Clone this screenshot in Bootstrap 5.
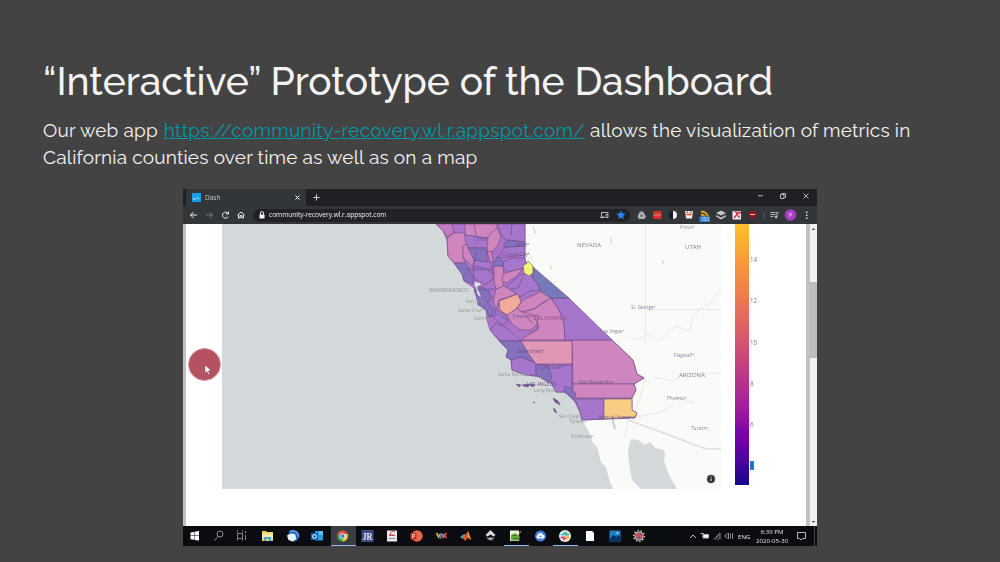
<!DOCTYPE html>
<html lang="en">
<head>
    <meta charset="utf-8">
    <title>Prototype of the Dashboard</title>
    <link rel="stylesheet" href="https://cdn.jsdelivr.net/npm/bootstrap@5.3.0/dist/css/bootstrap.min.css">
    <style>
        body { background: #434343; color: #f3f3f3; font-family: Raleway, Lato, sans-serif; width: 1000px; height: 562px; overflow: hidden; }
        .slide { padding: 58px 43px 0; height: 562px; }
        .slide h1 { font-size: 39px; line-height: 47px; font-weight: 500; letter-spacing: -.05px; margin: 0 0 12px; white-space: nowrap; }
        .intro { font-size: 19px; line-height: 27px; font-weight: 400; margin: 0 0 18px; white-space: nowrap; letter-spacing: .2px; }
        .intro a { color: #0097a7; letter-spacing: .28px; margin-left: .8px; }
        .window { width: 634px; height: 357px; margin-left: 140px; font-family: "Open Sans", sans-serif; filter: blur(.55px); background: #fff; }
        .tabs { height: 17px; background: #1e2024; }
        .tab { width: 120px; height: 17px; margin-left: 3px; padding: 0 6px; background: #323639; border-radius: 3px 3px 0 0; font-size: 6.5px; color: #c6c8ca; }
        .toolbar { height: 18px; background: #323639; }
        .address { width: 377px; height: 13px; border-radius: 7px; background: #202226; font-size: 6.55px; color: #f4f5f6; margin-left: 5px; padding: 0 0 0 6px; }
        .content { height: 302px; border-left: 3px solid #bfc0c2; }
        .gutter { width: 36px; }
        .scale { width: 14px; height: 261px; margin-left: 14px; background: linear-gradient(#fbc127 0, #f99a3b 14%, #ed7851 29%, #da5c69 42%, #c23e81 55%, #a11b9b 71%, #7601a8 81%, #4b03a1 91%, #150789 100%); }
        .ticks { width: 57px; padding: 31px 0 0 1px; font-size: 6.2px; line-height: 10px; color: #747883; }
        .ticks div { height: 41.3px; }
        .ticks .picked span { background: #2380d8; color: #125aa6; }
        .inner-bar { width: 4px; background: #c2c2c2; }
        .scroll { width: 7px; background: #f2f2f2; }
        .scroll .thumb { height: 76px; background: #bdbdbd; }
        .taskbar { height: 20px; background: #0b0c10; }
        .task { width: 24.7px; height: 20px; border-bottom: 1px solid transparent; }
        .task.open { border-color: #8fbdf0; }
        .task.current { background: #3a3d43; }
        .clock { font-size: 6.1px; line-height: 9px; color: #e6e6e6; width: 40px; padding-top: 1px; }
        .lang { width: 17px; padding: 0 0 0 3px; }
        .click-spot { left: 5px; top: 159px; width: 33px; height: 33px; border-radius: 50%; background: #b55262; border: 1px solid #d79ba4; }
        svg { display: block; flex: none; }
    </style>
</head>
<body>
    <main class="slide">
        <h1>“Interactive” Prototype of the Dashboard</h1>
        <p class="intro">Our web app <a href="#">https://community-recovery.wl.r.appspot.com/</a> allows the visualization of metrics in<br>California counties over time as well as on a map</p>

        <div class="window position-relative">
            <div class="tabs d-flex">
                <div class="tab d-flex align-items-center">
                    <svg width="9" height="9" class="me-1"><path fill="#169fe8" d="M0 0h9v9H0z"/><path fill="none" stroke="#a7dcf6" d="M1.5 7V5.500l2 .7 2-1.400 2 .8"/></svg>
                    <span>Dash</span>
                    <svg class="ms-auto" width="5" height="5"><path stroke="#fff" d="M.5.5l4 4m0-4l-4 4"/></svg>
                </div>
                <svg width="511" height="17">
                    <g fill="none" stroke="#b5b6b8"><path stroke="#dadbdc" d="M7.500 8.500h6m-3-3v6"/><path d="M452 6.700h5M474.500 5.500h3.500v4h-3.500zM476 5.500v-1h3.500v4h-1M497.500 4.500l5 5m0-5l-5 5"/></g>
                </svg>
            </div>
            <div class="toolbar d-flex align-items-center">
                <svg width="65" height="18" fill="none" stroke="#f0f0f1">
                    <path d="M14 9H7.500m3-3l-3 3 3 3"/>
                    <path stroke="#787b7f" d="M23 9h6.500m-3-3l3 3-3 3"/>
                    <path d="M45 7.500a3 3 0 1 0 .2 3M45.500 5.500V8H43M54.500 9l3.500-3 3.500 3M55.500 8.500v3.500h1.700V9.500h1.600v2.500h1.700V8.500"/>
                </svg>
                <div class="address d-flex align-items-center">
                    <svg width="6" height="8" class="me-1"><path fill="#f4f5f6" d="M.5 3.500h5v4h-5z"/><path fill="none" stroke="#e4e5e6" d="M1.500 4V2a1.500 1.500 0 0 1 3 0v2"/></svg>
                    <span>community-recovery.wl.r.appspot.com</span>
                    <svg class="ms-auto" width="31" height="12"><path fill="none" stroke="#b7b9bd" d="M5.500 8H2.500V3.500h6.500V5M1 8.500h4.500M7 5.500h2v3H7z"/><path fill="#2385ee" d="M22 1.500l1.300 2.800 3.200.4-2.400 2.200.7 3.200-2.800-1.600-2.800 1.600.7-3.200-2.400-2.200 3.200-.4z"/></svg>
                </div>
                <!-- extension buttons -->
                <svg width="187" height="18" viewBox="630 0 187 18">
                    <path fill="#aeb1b3" d="M640 5.500h3l3 5-1.500 2.500h-5.500l-1.500-2.500z"/><path fill="#54575a" d="M641.500 8l1.500 2.500h-3z"/>
                    <path fill="#d6302b" d="M653 5h8.500v8H653z"/><path stroke="#f4a9a4" stroke-dasharray="1.500 .5" d="M654 9h6.500"/>
                    <circle cx="673" cy="9" r="4" fill="#16181b"/><path fill="#f2f2f2" d="M673 5a4 4 0 0 1 0 8z"/>
                    <path fill="#f3ebe1" d="M685 5h8l-1 7.500h-6z"/><path stroke="#e0482f" d="M686.500 8.500h5M687 5.500v1.500m4-1.500v1.500" stroke-width="1.600"/>
                    <path fill="none" stroke="#e5a126" stroke-width="1.800" d="M701 5.500c3 0 6 2 7 5M701 8.500c2 0 3 1 4 2"/><path fill="#347bdd" d="M699.500 10.500h10.500v5.500h-10.500z"/><text x="701" y="15" font-size="4.500" fill="#e5effc">100</text>
                    <path fill="#c4c6c7" d="M721 4.500l5 2.500-5 2.500-5-2.500zM716 9l5 2.500 5-2.500v1.500l-5 3-5-3z"/>
                    <path fill="#f6ecec" d="M732.500 5h8.500v8.500h-8.500z"/><path fill="none" stroke="#c4283b" stroke-width="1.200" d="M734 12l5-6M734 6h2.500v2M737 10h2v2M738 6h2v2"/>
                    <path fill="#8b1922" d="M752.500 4.500l4 1.300v3.700l-4 4-4-4V5.800z"/><path stroke="#e9c3c6" d="M750 8.500h5"/>
                    <path stroke="#54575b" d="M764 6v7"/>
                    <path fill="none" stroke="#b7b9bd" d="M770.500 6.500h5M770.500 8.500h5M770.500 10.500h3M777 6v5.500M776.500 6.500h2"/><circle cx="776" cy="11" r="1.300" fill="#b7b9bd"/>
                    <circle cx="790.500" cy="9" r="5.800" fill="#a63fc0"/><text x="788.800" y="11.200" font-size="6" fill="#eed5f4">P</text>
                    <path fill="#dcdddf" d="M806 5.500h1.500V7H806zM806 8.500h1.500V10H806zM806 11.500h1.500V13H806z"/>
                </svg>
            </div>

            <div class="content d-flex">
                <div class="gutter"></div>
                <svg width="499" height="265" viewBox="222 224 499 265">
                    <path fill="#d3d8da" d="M222 224h499v265H222z"/>
                    <!-- land -->
                    <path fill="#fafaf8" d="M436 224l7 7 4 9 1 16 6 7 8 11 2 7 10 7 3 7 1 10 8 5 1 10 3 10 10 12 8 8 4 18 14 7h14l12 8 16 12 10 10 4 15 6 10 5 13 4 4 4 15 5 5 4 15 7 14h107V224z"/>
                    <path fill="#d3d8da" d="M631 439l7 1 7 5 5-3 5 6 9 2 1 5-1 6 5 14 8 14h-36l-9-9-3-18-1-12z"/>
                    <!-- roads and borders -->
                    <g fill="none" stroke="#e8e8e7">
                        <path d="M645.500 224v120M645 309.500h76M721 288l-9 14-12 8-7 7-4 14-14-5-15 15-14-8M645 336l-10 4-4-4M722 373h-30l-20 8-18-4M645 376l-4 20-9 24M637 417l20-4 18-8M675 397l20 6M628 420l-3 18"/>
                        <path stroke="#e6dadc" stroke-width="1.500" d="M628 420l25 9 53 20h15"/>
                        <path stroke="#ccd0d3" d="M533 227l3 7M551 265v4M611 237v7M663 260v4"/>
                        <path stroke="#c6cdd2" stroke-width="2" d="M612 418l3 11"/>
                    </g>
                    <!-- counties -->
                    <g stroke="#6b4b80" stroke-width=".6" stroke-linejoin="round">
                        <path fill="#ac74c9" d="M436 224h89v37l87 79 21 20 4 14 7 4-10 6 2 6-4 8v12l5 3-2 5-53 2-2-8-5-10-10-10h-9l-4-8-12-7-14-2-14-5-1-10-5-3 2-7-8-8-10-12-3-10-1-10-8-5-1-12-3-5-10-7-2-7-8-11-6-7-1-16-4-9z"/>
                        <g fill="#cf85be">
                            <path d="M436 224h16l2 9-7 4-4-6z" fill="#c17bc2"/>
                            <path d="M447 238l7-5h11l2 11-4 3v10l2 6h-11l-6-7z"/>
                            <path d="M465 224h32l-1 13-8 1-23-3z"/>
                            <path d="M463 246l4-2 6 9 3 10-4 3-9-9z"/>
                            <path d="M485 240l7-8 5-4 4 8-3 9-6 7-5-1z"/>
                            <path d="M487 251l5 1 1 11-3-1z"/>
                            <path d="M494 266h9l1 10-1 11-7 2-2-8z"/>
                            <path d="M503 274l5-2 15-4-6 8-11 7-4-2z"/>
                            <path d="M496 289l8-3 11 5 2 3-18 6-3 10-3-8z"/>
                            <path d="M517 308l6-8 13-6 6-3 9 7-9 5-8 6-12 3z"/>
                            <path d="M507 315l10-7 5 4 12-3 5 13-8 8h-10l-9-6z"/>
                            <path d="M522 312l12-3 17-11 8 12 5 12 1 18h-44l10-7 8-5-5-13z"/>
                            <path d="M572 340h40l21 20 4 14 7 4-10 6h-61z"/>
                            <path d="M573 384h61l2 6-4 8h-57l-2-8z"/>
                        </g>
                        <g fill="#a576cb">
                            <path d="M465 235l23 3-1 10h-19l-3-8z"/>
                            <path d="M498 224h27v18l-18-2-6-5z"/>
                            <path d="M497 258l8-11 20-1v9l-18 2z"/>
                            <path d="M503 262l9-4h13l1 6-3 4-15 4-5-4z"/>
                            <path d="M474 260l17 2 3 16-9 7-11-7-1-12z"/>
                            <path d="M506 287l14-12 10-2 6 9 5 8-11 1-10 6-5-4z"/>
                            <path d="M484 300l9 1 3 9 8 4 4 7-5 4-9-7-7-10z"/>
                            <path d="M551 298h18l43 42h-47l-1-17-5-13z"/>
                            <path d="M511 360l10-3 15 6v12l-10 0-14-5z"/>
                            <path d="M548 365h24v22l-7 5h-9l-4-8-4-8z"/>
                            <path d="M575 399h29v20l-22 1-2-8z"/>
                            <path d="M490 330l6-7 9 4 10 8 6 6h-21z"/>
                        </g>
                        <g fill="#8570bd">
                            <path d="M468 248h19v14l-13-2z"/>
                            <path d="M503 246l4-6 18 2v4l-20 1z"/>
                            <path d="M494 263l4-7 5 6v4h-9z"/>
                            <path d="M454 263h11l9 14v7l-10-3-2-7z"/>
                            <path d="M474 290l7-4 8 5 3 7-6 5-8-1z"/>
                            <path d="M478 303l8-3 10 12-6 6-4-8z"/>
                            <path fill="#777ab8" d="M533 267l36 31h-18l-10-6-3-8-5-6z"/>
                            <path d="M500 341h21l6 10 9 12-15-6-10 3-5-3 2-7z"/>
                            <path d="M536 364l12 1 4 13-4 4-12-7z"/>
                            <path d="M565 386l7 3 4 5-2 5-10-7z"/>
                        </g>
                        <path fill="#f0ac98" d="M499 301l19-7 3 8-4 6-10 7-7-5z"/>
                        <path fill="#f1f476" d="M523 265l3-1 2-3 5 5v7l-4 3-5-3z"/>
                        <path fill="#e296b6" d="M521 341h51v23h-36l-8-11z"/>
                        <path fill="#f9cc84" d="M604 399h28v11l5 3-2 4-31 2z"/>
                        <path fill="none" d="M477 252l-4 14 12 2 9 7M485 285l9-7M511 289l7-1 5-11M526 315l7 9M474 224l2 11M512 224l-1 12M529 317l9-2-1 15-8 4M486 318l12-4 10 7"/>
                        <path fill="#75539a" d="M516 384l5 1-2 2zM522 385l8-1-2 3-4-1zM530 384l5 1-3 2zM533 402l2 1zM553 398l5 3 2 4-5-3zM554 408l3 5-3-2z"/>
                    </g>
                    <path fill="#e6e4eb" d="M474 282l6 1 1 2-4 1 2 6 2 5-3-2-3-9z"/>
                    <!-- place labels -->
                    <g font-family="Open Sans, sans-serif" font-size="4.700" fill="#858b94">
                        <g font-size="6" fill="#7f858f">
                            <text x="577" y="247" textLength="24">NEVADA</text><text x="685" y="249" textLength="16">UTAH</text><text x="679" y="377" textLength="26">ARIZONA</text>
                            <text x="429" y="292" textLength="40" fill="#8f969e">SAN FRANCISCO</text><text x="533" y="320" textLength="34" fill="#8b5693">CALIFORNIA</text>
                        </g>
                        <text x="680" y="228.500">Provo•</text><text x="631" y="309">St. George•</text><text x="601" y="333">Las Vegas•</text><text x="674" y="357">Flagstaff•</text><text x="667" y="400">Phoenix•</text><text x="691" y="430">Tucson•</text>
                        <g fill="#6d568b"><text x="474" y="241">Chico•</text><text x="516" y="246">Reno•</text><text x="503" y="256">Carson City•</text><text x="466" y="271">Sacramento</text><text x="474" y="291">Stockton•</text><text x="513" y="318">Fresno•</text><text x="518" y="353">Bakersfield•</text><text x="540" y="369">Lancaster•</text><text x="578" y="384">•San Bernardino</text><text x="527" y="386">LOS ANGELES</text><text x="598" y="419">Mexicali Yuma•</text></g>
                        <g fill="#989da3"><text x="466" y="303">San Jose•</text><text x="458" y="312">Santa Cruz•</text><text x="474" y="320">Salinas•</text><text x="498" y="376">Santa Barbara</text><text x="534" y="392">Long Beach</text><text x="559" y="418">San Diego•</text><text x="569" y="423">Tijuana•</text><text x="571" y="438">Ensenada•</text></g>
                    </g>
                    <circle cx="711" cy="479" r="5" fill="#ddd"/><circle cx="711" cy="479" r="3.900" fill="#303030"/><path stroke="#fff" d="M711 478.500v2.500M711 476.500v1"/>
                </svg>
                <div class="scale"></div>
                <div class="ticks">
                    <div>14</div><div>12</div><div>10</div><div>8</div><div>6</div><div class="picked"><span>4</span></div>
                </div>
                <div class="inner-bar"></div>
                <div class="scroll d-flex flex-column ms-auto">
                    <svg width="7" height="58"><path fill="#555" d="M1.500 6l2-2 2 2z"/></svg>
                    <div class="thumb"></div>
                    <svg class="mt-auto" width="7" height="8"><path fill="#555" d="M1.500 3l2 2 2-2z"/></svg>
                </div>
            </div>

            <div class="taskbar d-flex">
                <div class="task"><svg width="24" height="19"><path fill="#fff" d="M7.500 6.500l3.500-.6v3.600H7.500zM11.500 5.800l4.500-.7v4.400h-4.500zM7.500 10H11v3.800l-3.500-.6zM11.500 10H16v4.600l-4.500-.7z"/></svg></div>
                <div class="task"><svg width="24" height="19" fill="none" stroke="#929395"><circle cx="12" cy="8" r="3"/><path d="M10 10.500l-3.500 4"/></svg></div>
                <div class="task"><svg width="24" height="19" fill="none" stroke="#858688"><path d="M5.500 7.500h5v5h-5zM5.500 4.500v2m5-2v2m-5 6v2m5-2v2M13.500 5v2m0 2v5"/></svg></div>
                <div class="task"><svg width="24" height="19"><path fill="#f3ce62" d="M5 5h4l1 1h6v9H5z"/><path fill="#fbe99d" d="M5 7.500h11v5H5z"/><path fill="#42a5dc" d="M7 11h7v4h-2v-2H9v2H7z"/></svg></div>
                <div class="task"><svg width="24" height="19"><circle cx="11.500" cy="10" r="5.800" fill="#2160ae"/><path fill="#edf2f7" d="M5 9.500l4-2 4 .5 1.500 5-4 2.500-4-1.500z"/><path fill="none" stroke="#5ba8ee" stroke-width="1.500" d="M7.500 6c4-3 9 0 9 5"/></svg></div>
                <div class="task"><svg width="24" height="19"><path fill="#2799df" d="M9 5h8v9.500H9z"/><path fill="#54c1f1" d="M13 5h4v4h-4z"/><path fill="#0868b7" d="M5 7h7v7H5z"/><circle cx="8.500" cy="10.500" r="1.900" fill="none" stroke="#fff"/></svg></div>
                <div class="task open current"><svg width="24" height="19"><circle cx="11.500" cy="10" r="5.500" fill="#37a852"/><path fill="#df4939" d="M6.700 7.200A5.500 5.500 0 0 1 16.500 8l-5 2L9 11.500z"/><path fill="#f8c83e" d="M11.500 8h5.200c1 4-1.500 7.500-5.700 7.500l3-5z"/><circle cx="11.500" cy="10" r="2.800" fill="#fff"/><circle cx="11.500" cy="10" r="2.100" fill="#3d82e7"/></svg></div>
                <div class="task"><svg width="24" height="19"><path fill="#3e4c85" d="M5.500 4h12v12h-12z"/><text x="6.500" y="14" font-size="11" font-weight="bold" textLength="10" lengthAdjust="spacingAndGlyphs" fill="#e6edf8" font-family="Liberation Serif">JR</text></svg></div>
                <div class="task"><svg width="24" height="19"><path fill="#eee9eb" d="M6 4.500h10v11H6z"/><path fill="none" stroke="#c64555" d="M8 9.500h6M14 5.500c-3-1-5 1-5 3.500h4"/><path stroke="#8f8b90" d="M7.500 12.500h7"/></svg></div>
                <div class="task"><svg width="24" height="19"><circle cx="12" cy="10" r="5.700" fill="#ea6847"/><path fill="#bc3520" d="M5.500 7h6v6.500h-6z"/><text x="6.500" y="12.500" font-size="6.500" fill="#fff">P</text></svg></div>
                <div class="task"><svg width="24" height="19" fill="none" stroke-width="1.700"><path stroke="#eba838" d="M6.500 7l2 4 2-3"/><path stroke="#4382ca" d="M10.500 13V8l2 .5v2.500"/><path stroke="#e2633c" d="M12.500 8l4 4m0-5l-4 5"/></svg></div>
                <div class="task"><svg width="24" height="19"><path fill="#4f9bb8" d="M5 11l4-3 2 1-3 4z"/><path fill="#db552d" d="M8 12l5-7 3 9-3-2-3 3z"/><path fill="#f5ac4c" d="M13 5l3 9-3-3z"/></svg></div>
                <div class="task"><svg width="24" height="19"><path fill="#d8dce0" d="M6.500 9l5-5 5 5-2 1.500-3-2-3 2z"/><path fill="#9da1a4" d="M7 10.500l2 1.500 2.500-1 2.500 1 2-1.500-2 3-2.500 1-2.500-1z"/></svg></div>
                <div class="task open"><svg width="24" height="19"><path fill="#e8f3df" d="M6 4.500h9v10.500H6z"/><path fill="#66ab3b" d="M7 9l4-2 4.500 3v4.500H7z"/><path fill="none" stroke="#42752c" d="M8.500 9.500h5m-4 3h5"/><path stroke="#ce9c52" d="M13.500 10l3.500-5"/></svg></div>
                <div class="task"><svg width="24" height="19"><circle cx="11.500" cy="10" r="5.500" fill="#3f7ddd"/><path fill="#fff" d="M8.500 12.500a2 2 0 0 1 0-3.500 3 3 0 0 1 5.700 0 1.800 1.800 0 0 1 0 3.500z"/><circle cx="11.500" cy="10.500" r="1" fill="#3f7ddd"/></svg></div>
                <div class="task open"><svg width="24" height="19"><circle cx="12" cy="10" r="6" fill="#f3f3f3"/><g fill="none" stroke-width="1.800" stroke-linecap="round"><path stroke="#44bee8" d="M11 6.500v2H8.500"/><path stroke="#3eaf7d" d="M13 6.500v2h2.500"/><path stroke="#dfaa39" d="M13 13.500v-2h2.500"/><path stroke="#d93e69" d="M11 13.500v-2H8.500"/></g></svg></div>
                <div class="task"><svg width="24" height="19"><path fill="#fff" d="M8 5h6l2 2v8H8z"/><path fill="#c4c6c8" d="M14 5v2h2z"/></svg></div>
                <div class="task"><svg width="24" height="19"><path fill="#1d80c7" d="M6.500 4.500h11v11h-11z"/><path fill="#0b3262" d="M6.500 13l4-4 3 2 2-2 2 2v4.500h-11z"/><circle cx="14.500" cy="7" r="1" fill="#c9e8fa"/></svg></div>
                <div class="task"><svg width="24" height="19"><g fill="none"><circle cx="12" cy="10" r="4" fill="#686568" stroke="#c5c2c2" stroke-width="1.200"/><circle cx="12" cy="10" r="5.400" stroke="#d5d2d2" stroke-width="1.300" stroke-dasharray="1.500 1.800"/><path stroke="#e04a50" stroke-width="1.500" d="M8 8.500l2.500 2.500L12 7.500l1.500 3.500L16 8.500"/></g></svg></div>
                <svg class="ms-auto" width="56" height="20" fill="none" stroke="#b9bdc0">
                    <path d="M11 12l3-3 3 3"/><path fill="#f5f6f7" d="M24 8.500h5.500v3.500H24z"/><path d="M21.500 7.500h3v2"/>
                    <g stroke="#85878a"><path d="M35 13.500l6-6.500v6.500M37 13.500c0-2 1-3 3-4M38.500 13.500l2-2M46 9h1.500l2-2v6l-2-2H46zM51.500 8v4M53.500 7v6"/></g>
                </svg>
                <div class="clock lang d-flex align-items-center">ENG</div>
                <div class="clock text-center"><div>6:39 PM</div><div>2020-05-30</div></div>
                <svg width="25" height="20" fill="none" stroke="#b9bdc0"><path d="M5.500 6.500h8v6h-3L9 14l-1.500-1.500h-2z"/><path stroke="#44474a" d="M22.500 0v20"/></svg>
            </div>

            <div class="click-spot position-absolute">
                <svg width="31" height="31"><path fill="#fff" stroke="#77525b" stroke-width=".5" d="M16 16v8l2-1.500 1.500 3 1.200-.6-1.300-2.900 2.600-.5z"/></svg>
            </div>
        </div>
    </main>
    <script src="https://cdn.jsdelivr.net/npm/bootstrap@5.3.0/dist/js/bootstrap.bundle.min.js"></script>
</body>
</html>
